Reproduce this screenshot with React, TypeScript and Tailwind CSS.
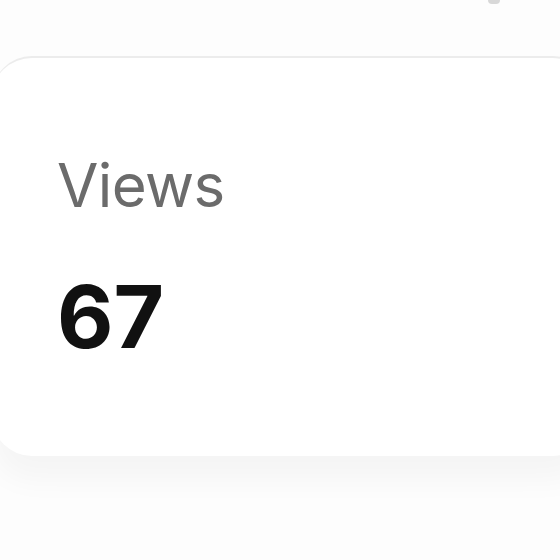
export default function App() {
    return (
        <div className="w-[560px] h-[560px] overflow-hidden bg-[#fdfdfd] relative" style={{ fontFamily: 'Inter, "Noto Sans", sans-serif' }}>
            <div className="absolute left-[488px] top-0 w-[12px] h-[4px] rounded-b-full bg-[#d8d8d8]" />
            <div className="pt-[56px] pl-0">
                <div className="-ml-[8px] w-[600px] h-[400px] bg-white rounded-[40px] border-t-2 border-[#ececec] shadow-[0_24px_30px_rgba(0,0,0,0.035)] px-[65px] pt-[97px]">
                    <div className="text-[60px] leading-none text-[#6b6b6b] font-normal tracking-[-0.6px]">Views</div>
                    <div className="mt-[58px] text-[87px] leading-none text-[#111] font-bold">67</div>
                </div>
            </div>
        </div>
    )
}
